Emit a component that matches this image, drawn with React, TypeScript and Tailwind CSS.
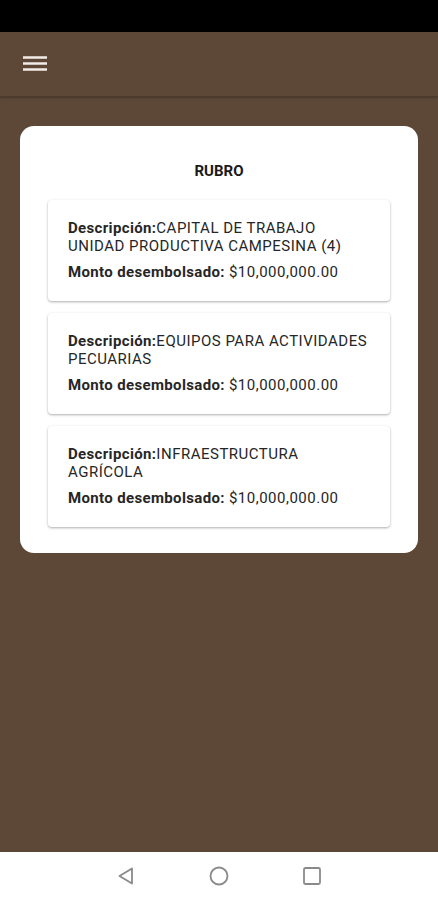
import React from "react";

const items = [
  { d: "CAPITAL DE TRABAJO UNIDAD PRODUCTIVA CAMPESINA (4)", m: "$10,000,000.00" },
  { d: "EQUIPOS PARA ACTIVIDADES PECUARIAS", m: "$10,000,000.00" },
  { d: "INFRAESTRUCTURA AGRÍCOLA", m: "$10,000,000.00" },
];

export default function App() {
  return (
    <div
      className="w-[438px] h-[900px] flex flex-col bg-[#5d4838] overflow-hidden"
      style={{ fontFamily: "Roboto, 'Liberation Sans', sans-serif" }}
    >
      <div className="h-[32px] bg-black shrink-0" />
      <div className="h-[65px] shrink-0 flex items-center pl-[23px] border-b border-[#4e3b2d] shadow-[0_1px_2px_rgba(0,0,0,0.25)]">
        <svg width="24" height="18" viewBox="0 0 24 18">
          <path d="M0 2.5h24M0 8.5h24M0 14.5h24" stroke="#f2ece6" strokeWidth="2.6" />
        </svg>
      </div>
      <div className="flex-1 px-[20px] pt-[29px]">
        <div className="bg-white rounded-[14px] px-[28px] pt-[36px] pb-[26px]">
          <div className="text-center text-[15px] font-bold text-[#1a1a1a] leading-[18px]">RUBRO</div>
          <div className="mt-[20px] flex flex-col gap-[12px]">
            {items.map((it, i) => (
              <div
                key={i}
                className="rounded-[4px] bg-white shadow-[0_1px_3px_rgba(0,0,0,0.22),0_1px_2px_rgba(0,0,0,0.12)] pl-[20px] pr-[20px] pt-[19px] pb-[18px] h-[101px]"
              >
                <div className="text-[15px] leading-[18px] text-[#262626] tracking-[0.5px]">
                  <span className="font-bold tracking-[0.35px]">Descripción:</span>
                  {it.d}
                </div>
                <div className="mt-[8px] text-[15px] leading-[18px] text-[#262626] tracking-[0.5px]">
                  <span className="font-bold tracking-[0.35px]">Monto desembolsado: </span>
                  {it.m}
                </div>
              </div>
            ))}
          </div>
        </div>
      </div>
      <div className="h-[48px] shrink-0 bg-white flex items-center justify-center gap-[69px]">
        <svg width="24" height="24" viewBox="0 0 24 24">
          <path d="M18 4.5v15L5.5 12z" fill="none" stroke="#8a8a8a" strokeWidth="1.8" strokeLinejoin="round" />
        </svg>
        <svg width="24" height="24" viewBox="0 0 24 24">
          <circle cx="12" cy="12" r="8.5" fill="none" stroke="#8a8a8a" strokeWidth="1.8" />
        </svg>
        <svg width="24" height="24" viewBox="0 0 24 24">
          <rect x="4" y="4" width="16" height="16" rx="1.5" fill="none" stroke="#8a8a8a" strokeWidth="1.8" />
        </svg>
      </div>
    </div>
  );
}
